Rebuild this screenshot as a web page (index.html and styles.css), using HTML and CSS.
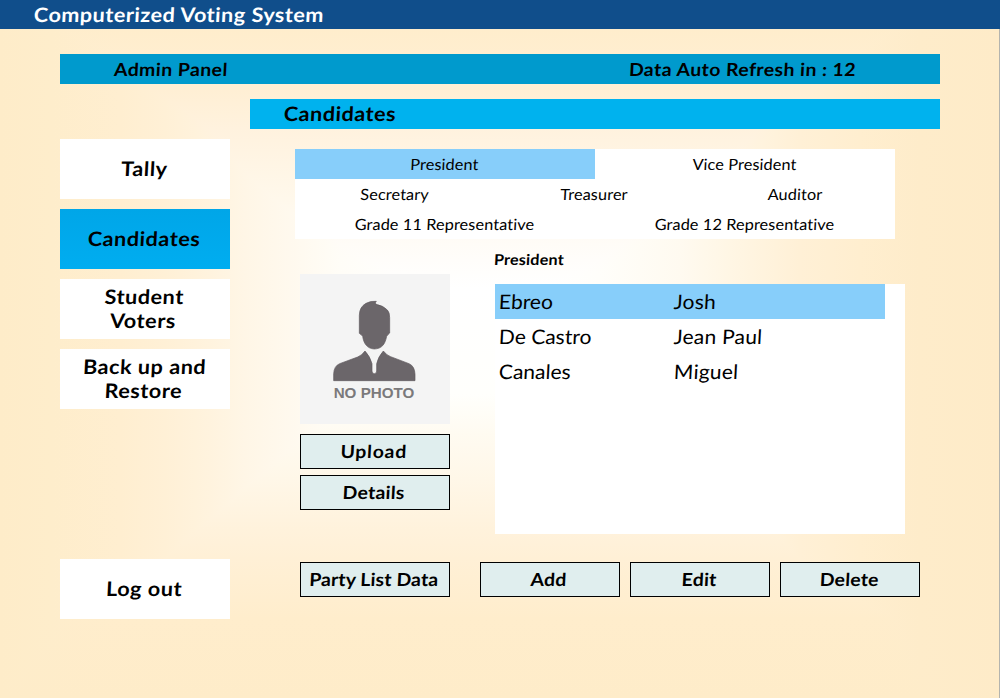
FILE: index.html
```html
<!DOCTYPE html>
<html lang="en">
<head>
<meta charset="utf-8">
<title>Computerized Voting System</title>
<link rel="stylesheet" href="styles.css">
</head>
<body>
<div class="window">
  <header class="titlebar"><span class="t title">Computerized Voting System</span></header>
  <div class="content">
    <div class="panelbar">
      <span class="panel-name"><span class="t">Admin Panel</span></span>
      <span class="t refresh">Data Auto Refresh in : 12</span>
    </div>
    <div class="columns">
      <nav class="sidebar">
        <button class="nav"><span class="t">Tally</span></button>
        <button class="nav active"><span class="t">Candidates</span></button>
        <button class="nav"><span class="t">Student<br>Voters</span></button>
        <button class="nav"><span class="t">Back up and<br>Restore</span></button>
        <button class="nav logout"><span class="t">Log out</span></button>
      </nav>
      <main class="main">
        <h1 class="heading"><span class="t">Candidates</span></h1>
        <div class="tabs">
          <div class="tabrow"><span class="tab selected"><span class="t">President</span></span><span class="tab"><span class="t">Vice President</span></span></div>
          <div class="tabrow"><span class="tab"><span class="t">Secretary</span></span><span class="tab"><span class="t">Treasurer</span></span><span class="tab"><span class="t">Auditor</span></span></div>
          <div class="tabrow"><span class="tab"><span class="t">Grade 11 Representative</span></span><span class="tab"><span class="t">Grade 12 Representative</span></span></div>
        </div>
        <div class="detail">
          <div class="profile">
            <svg class="photo" viewBox="30 27 450 450">
              <rect x="30" y="27" width="450" height="450" fill="#f4f4f4"/>
              <g fill="#6b666a" stroke="#5d585c" stroke-width="2">
                <path d="M208 205V151Q208 126 228 115Q242 107 259 109Q254 113 258 118Q280 122 292 135Q299 142 299 158V204Q294 208 290 214C285 238 276 251 253 252C231 251 221 235 218 214Q213 208 208 205Z"/>
                <path d="M131 347V326Q132 303 149 296L203 276Q216 271 225 258Q240 274 246 296V318Q246 326 253 326Q260 326 260 318V296Q264 276 280 258Q290 271 302 275L357 296Q374 303 375 328V347Z"/>
              </g>
              <text x="131" y="399" textLength="242" lengthAdjust="spacingAndGlyphs" class="nophoto">NO PHOTO</text>
            </svg>
            <button class="btn upload"><span class="t">Upload</span></button>
            <button class="btn"><span class="t">Details</span></button>
          </div>
          <div class="listing">
            <h2 class="position"><span class="t">President</span></h2>
            <div class="list">
              <div class="row selected"><span class="t">Ebreo</span><span class="t">Josh</span></div>
              <div class="row"><span class="t">De Castro</span><span class="t">Jean Paul</span></div>
              <div class="row"><span class="t">Canales</span><span class="t">Miguel</span></div>
            </div>
          </div>
        </div>
        <div class="actions">
          <button class="btn party"><span class="t">Party List Data</span></button>
          <button class="btn"><span class="t">Add</span></button>
          <button class="btn"><span class="t">Edit</span></button>
          <button class="btn"><span class="t">Delete</span></button>
        </div>
      </main>
    </div>
  </div>
</div>
</body>
</html>
```
FILE: styles.css
```css
* { box-sizing: border-box; }
body { margin: 0; font-family: Lato, "Noto Sans", sans-serif; color: #000; }
button { font-family: inherit; color: inherit; padding: 0; margin: 0; border: 0; border-radius: 0; }

/* Wide, slightly slanted lettering */
.t { display: inline-block; transform: skewX(-3deg) scaleX(1.08); white-space: nowrap; }
.titlebar .t, .panelbar .t, .heading .t, .position .t, .row .t { transform-origin: 0 50%; }
.tab .t, .row .t { transform: skewX(-3deg) scaleX(1.05); }

.window { width: 1000px; height: 698px; overflow: hidden; display: flex; flex-direction: column; }
.titlebar { height: 29px; flex: none; background: #104e8b; color: #fff; padding-left: 34px; line-height: 28px; font-size: 20px; font-weight: 700; }
.title { letter-spacing: .45px; }

/* The darker of the two gradients wins, giving rectangular contours */
.content {
  flex: 1; padding: 25px 59px 0 60px; border-right: 1px solid #b4b4ae;
  background:
    linear-gradient(90deg, #feecc9 0, #feedcb 50px, #ffeed0 120px, #fff0d6 165px, #fff3de 210px, #fff6e6 245px, #fff9ee 290px, #fffdf7 340px, #fff 420px, #fff 540px, #fffefa 600px, #fffaf0 680px, #fff5e2 740px, #fff0d6 800px, #ffeecf 860px, #feecca 920px, #feebc8 1000px),
    linear-gradient(180deg, #ffedcc 0, #ffefd4 60px, #fff2de 100px, #fff8eb 170px, #fffcf7 215px, #fff 260px, #fffffc 365px, #fffbf1 405px, #fff7e8 450px, #fff2dc 500px, #fff0d6 530px, #ffedcc 590px, #feecc9 669px);
  background-blend-mode: darken;
}
.panelbar { display: flex; height: 30px; width: 880px; background: #009acd; line-height: 31px; font-size: 18px; font-weight: 700; letter-spacing: .4px; }
.panel-name { margin-left: 54px; width: 515px; }
.columns { display: flex; gap: 20px; width: 880px; }
.sidebar { width: 170px; flex: none; display: flex; flex-direction: column; gap: 10px; padding-top: 55px; }
.nav { height: 60px; background: #fff; font-size: 20px; line-height: 24px; font-weight: 700; letter-spacing: .5px; text-align: center; padding-bottom: 2px; }
.nav .t { margin-right: 2px; }
.nav.active { background: linear-gradient(#00a6e8, #00adf0); }
.logout { margin-top: 140px; }
.main { width: 690px; padding-top: 15px; }
.heading { margin: 0; height: 30px; padding-left: 34px; background: #00b2ee; font-size: 20px; line-height: 28px; font-weight: 700; letter-spacing: .45px; }
.tabs { margin: 20px 0 0 45px; width: 600px; background: #fff; }
.tabrow { display: flex; height: 30px; font-size: 15.5px; line-height: 31px; letter-spacing: .1px; text-align: center; }
.tab { flex: 1; padding-right: 1px; }
.selected { background: #87cefa; }
.detail { display: flex; gap: 45px; margin-left: 50px; }
.profile { width: 150px; padding-top: 35px; display: flex; flex-direction: column; }
.photo { width: 150px; height: 150px; display: block; margin-bottom: 10px; }
.nophoto { font: bold 46px "Liberation Sans", Arial, sans-serif; fill: #7b797b; }
.btn { height: 35px; background: #e0eeee; border: 1px solid #000; font-size: 18px; line-height: 33px; font-weight: 700; letter-spacing: .2px; }
.upload { letter-spacing: .7px; }
.btn .t { margin-right: 2px; }
.profile .btn + .btn { margin-top: 6px; }
.position { margin: 0 0 0 -1px; height: 45px; font-size: 15px; line-height: 41px; font-weight: 700; letter-spacing: .15px; }
.list { width: 410px; height: 250px; background: #fff; }
.row { display: grid; grid-template-columns: 175px 1fr; width: 390px; height: 35px; padding-left: 4px; font-size: 20px; line-height: 34px; }
.row .t + .t { letter-spacing: .2px; }
.actions { display: grid; grid-template-columns: 170px 140px 140px 140px; column-gap: 10px; margin: 28px 0 0 50px; }
.party { width: 150px; letter-spacing: .1px; }
```
